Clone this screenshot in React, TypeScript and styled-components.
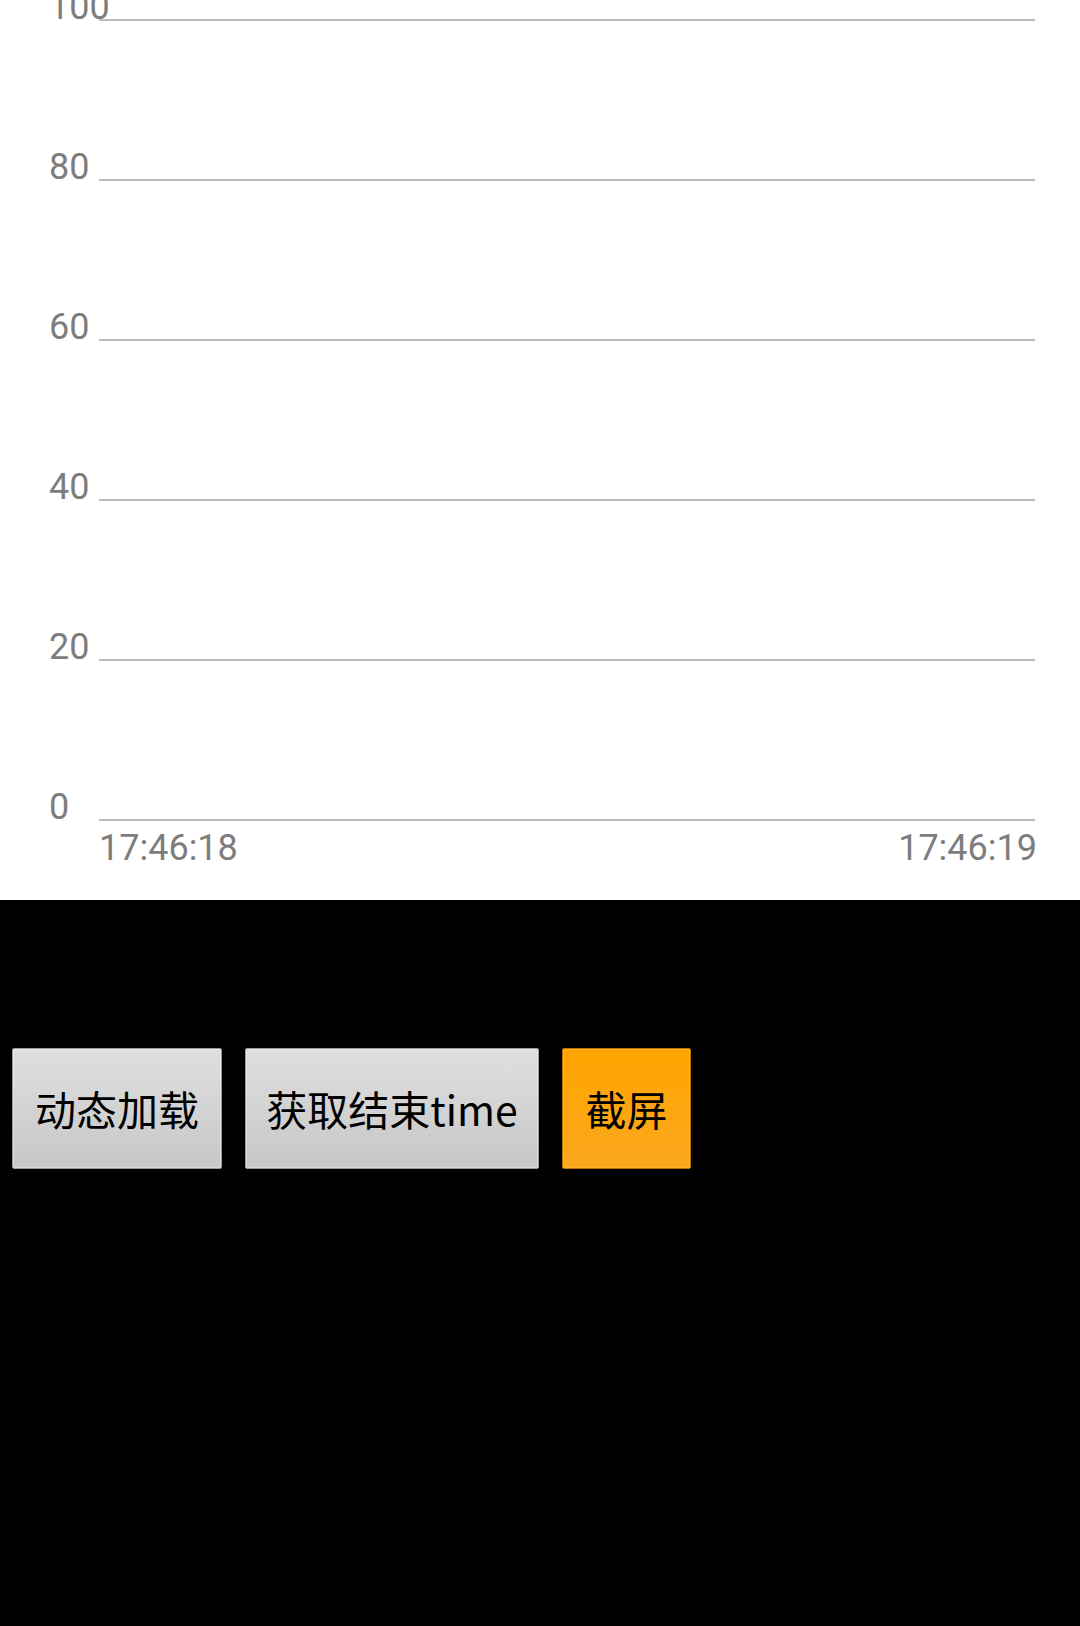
import React from "react";
import styled, { createGlobalStyle } from "styled-components";

const Global = createGlobalStyle`
  html, body { margin: 0; padding: 0; background: #000; }
  body { width: 1080px; height: 1626px; overflow: hidden; font-family: "Noto Sans CJK SC", "Noto Sans", sans-serif; }
`;

const Screen = styled.div`
  width: 1080px;
  height: 1626px;
  background: #000;
  display: flex;
  flex-direction: column;
`;

const ChartPanel = styled.div`
  width: 1080px;
  height: 900px;
  background: #fff;
  flex: none;
`;

const ChartSvg = styled.svg`
  display: block;
  width: 1080px;
  height: 900px;
`;

const ButtonRow = styled.div`
  display: flex;
  align-items: flex-start;
  gap: 23px;
  padding: 148px 0 0 12px;
`;

const Button = styled.button<{ $accent?: boolean; $w: number }>`
  box-sizing: border-box;
  width: ${(p) => p.$w}px;
  height: 121px;
  margin: 0;
  padding: 0;
  display: flex;
  align-items: center;
  justify-content: center;
  font-family: "Noto Sans CJK SC", "Noto Sans", sans-serif;
  font-size: 41px;
  line-height: 1;
  color: #000;
  border-radius: 2px;
  border: 1px solid ${(p) => (p.$accent ? "#b87400" : "#9a9a9a")};
  background: ${(p) =>
    p.$accent
      ? "linear-gradient(#ffa400, #fba81e)"
      : "linear-gradient(#dfdfdf, #c7c7c7)"};
  box-shadow: inset 0 0 0 1px ${(p) => (p.$accent ? "rgba(255,200,80,0.35)" : "rgba(255,255,255,0.35)")};
`;

const yTicks = [100, 80, 60, 40, 20, 0];

export default function App() {
  return (
    <>
      <Global />
      <Screen>
        <ChartPanel>
          <ChartSvg viewBox="0 0 1080 900">
            {yTicks.map((v, i) => {
              const y = 20 + i * 160;
              return (
                <g key={v}>
                  <line x1={99} x2={1035} y1={y} y2={y} stroke="#bdbdbd" strokeWidth={2} />
                  <text
                    x={49}
                    y={y - 1}
                    fill="#7d7d7d"
                    fontFamily="Roboto, sans-serif"
                    fontSize={36}
                  >
                    {v}
                  </text>
                </g>
              );
            })}
            <text x={99} y={860} fill="#7d7d7d" fontFamily="Roboto, sans-serif" fontSize={36}>
              17:46:18
            </text>
            <text x={1037} y={860} textAnchor="end" fill="#7d7d7d" fontFamily="Roboto, sans-serif" fontSize={36}>
              17:46:19
            </text>
          </ChartSvg>
        </ChartPanel>
        <ButtonRow>
          <Button $w={210}>动态加载</Button>
          <Button $w={294}>获取结束time</Button>
          <Button $w={129} $accent>
            截屏
          </Button>
        </ButtonRow>
      </Screen>
    </>
  );
}
